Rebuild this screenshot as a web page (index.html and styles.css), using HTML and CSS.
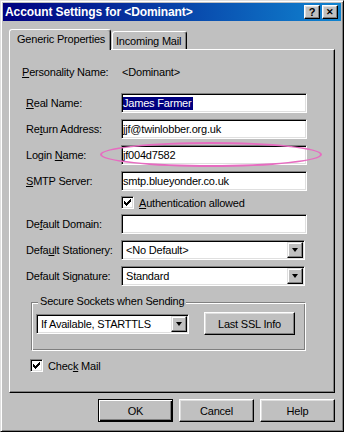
FILE: index.html
```html
<!DOCTYPE html>
<html lang="en">
<head>
  <meta charset="UTF-8">
  <title>Account Settings for &lt;Dominant&gt;</title>
  <link rel="stylesheet" href="styles.css">
</head>
<body>
  <div class="window">
    <div class="titlebar">
      <span class="title">Account Settings for &lt;Dominant&gt;</span>
      <div class="title-buttons">
        <button class="tbtn">?</button>
        <button class="tbtn close">&#x2715;</button>
      </div>
    </div>

    <div class="tabs">
      <div class="tab active">Generic Properties</div>
      <div class="tab">Incoming Mail</div>
    </div>

    <div class="panel">
      <div class="row personality">
        <span class="label"><u>P</u>ersonality Name:</span>
        <span>&lt;Dominant&gt;</span>
      </div>

      <div class="row first">
        <span class="label"><u>R</u>eal Name:</span>
        <div class="field"><span class="selected">James Farmer</span></div>
      </div>
      <div class="row">
        <span class="label">Re<u>t</u>urn Address:</span>
        <div class="field">jjf@twinlobber.org.uk</div>
      </div>
      <div class="row">
        <span class="label">Login <u>N</u>ame:</span>
        <div class="field">jf004d7582</div>
      </div>
      <div class="row">
        <span class="label"><u>S</u>MTP Server:</span>
        <div class="field">smtp.blueyonder.co.uk</div>
      </div>
      <div class="check-row auth">
        <span class="checkbox">
          <svg width="7" height="7" viewBox="0 0 7 7"><path d="M0 2h1v1h1v1h1v-1h1v-1h1v-1h1v-1h1v3h-1v1h-1v1h-1v1h-1v1h-1v-1h-1v-1h-1z" fill="#000"/></svg>
        </span>
        <span class="check-label"><u>A</u>uthentication allowed</span>
      </div>
      <div class="row domain">
        <span class="label">De<u>f</u>ault Domain:</span>
        <div class="field"></div>
      </div>
      <div class="row">
        <span class="label">Defa<u>u</u>lt Stationery:</span>
        <div class="combo">
          <span class="combo-text">&lt;No Default&gt;</span>
          <span class="combo-arrow"><i></i></span>
        </div>
      </div>
      <div class="row">
        <span class="label">Default Signature:</span>
        <div class="combo">
          <span class="combo-text">Standard</span>
          <span class="combo-arrow"><i></i></span>
        </div>
      </div>

      <div class="group">
        <span class="legend">Secure Sockets when Sending</span>
        <div class="group-row">
          <div class="combo small">
            <span class="combo-text">If Available, STARTTLS</span>
            <span class="combo-arrow"><i></i></span>
          </div>
          <button class="btn ssl">Last SSL Info</button>
        </div>
      </div>

      <div class="check-row mail">
        <span class="checkbox">
          <svg width="7" height="7" viewBox="0 0 7 7"><path d="M0 2h1v1h1v1h1v-1h1v-1h1v-1h1v-1h1v3h-1v1h-1v1h-1v1h-1v1h-1v-1h-1v-1h-1z" fill="#000"/></svg>
        </span>
        <span class="check-label">Chec<u>k</u> Mail</span>
      </div>
    </div>

    <div class="actions">
      <button class="btn default">OK</button>
      <button class="btn">Cancel</button>
      <button class="btn">Help</button>
    </div>

    <!-- pink ring drawn over the login field -->
    <div class="ring"></div>
  </div>
</body>
</html>
```

FILE: styles.css
```css
body {
  margin: 0;
  background: #c0c0c0;
  font-family: "Liberation Sans", Arial, sans-serif;
  font-size: 11px;
  letter-spacing: -0.2px;
  color: #000;
}

u {
  text-decoration: underline;
  text-underline-offset: 1px;
}

.window {
  position: relative;
  width: 344px;
  height: 432px;
  box-sizing: border-box;
  border: 1px solid;
  border-color: #dfdfdf #000 #000 #dfdfdf;
  box-shadow: inset 1px 1px #fff, inset -1px -1px #808080;
  padding: 2px;
  background: #c0c0c0;
  display: flex;
  flex-direction: column;
}

/* title bar */
.titlebar {
  height: 18px;
  flex-shrink: 0;
  display: flex;
  align-items: center;
  justify-content: space-between;
  padding: 0 3px 0 2px;
  background: linear-gradient(to right, #000080, #1084d0);
  color: #fff;
}

.title {
  font-size: 12px;
  font-weight: bold;
  letter-spacing: -0.1px;
}

.title-buttons {
  display: flex;
  gap: 2px;
}

.tbtn {
  width: 16px;
  height: 14px;
  box-sizing: border-box;
  padding: 0;
  border: 1px solid;
  border-color: #fff #000 #000 #fff;
  box-shadow: inset -1px -1px #808080, inset 1px 1px #dfdfdf;
  background: #c0c0c0;
  color: #000;
  font-family: "Liberation Sans", Arial, sans-serif;
  font-size: 11px;
  font-weight: bold;
  line-height: 12px;
  display: flex;
  align-items: center;
  justify-content: center;
}

.tbtn.close {
  font-size: 9px;
}

/* tabs */
.tabs {
  display: flex;
  align-items: flex-end;
  height: 20px;
  margin-top: 8px;
  padding-left: 6px;
  position: relative;
  z-index: 1;
}

.tab {
  height: 18px;
  box-sizing: border-box;
  border: 1px solid;
  border-bottom: none;
  border-color: #fff #000 transparent #fff;
  border-radius: 3px 3px 0 0;
  box-shadow: inset -1px 0 #808080;
  background: #c0c0c0;
  display: flex;
  align-items: center;
  width: 75px;
  padding-left: 3px;
  margin-left: 1px;
}

.tab.active {
  height: 21px;
  width: 102px;
  padding-left: 7px;
  padding-bottom: 3px;
  margin-left: 0;
  margin-bottom: -1px;
}

/* panel */
.panel {
  margin: 0 6px;
  height: 344px;
  flex-shrink: 0;
  box-sizing: border-box;
  border: 1px solid;
  border-color: #fff #000 #000 #fff;
  box-shadow: inset -1px -1px #808080;
  padding-top: 12px;
}

.row {
  display: flex;
  align-items: center;
  height: 20px;
  padding-left: 16px;
  margin-top: 6px;
}

.row.personality {
  padding-left: 12px;
  margin-top: 0;
}

.row.personality .label {
  width: 100px;
}

.row.first {
  margin-top: 11px;
}

.row.domain {
  margin-top: 5px;
}

.label {
  width: 95px;
  flex-shrink: 0;
}

.field {
  width: 186px;
  height: 20px;
  box-sizing: border-box;
  background: #fff;
  border: 1px solid;
  border-color: #808080 #fff #fff #808080;
  box-shadow: inset 1px 1px #000, inset -1px -1px #dfdfdf;
  padding-left: 1px;
  display: flex;
  align-items: center;
}

.selected {
  background: #000080;
  color: #fff;
  line-height: 13px;
  padding-right: 1px;
}

.combo {
  width: 184px;
  height: 20px;
  box-sizing: border-box;
  background: #fff;
  border: 1px solid;
  border-color: #808080 #fff #fff #808080;
  box-shadow: inset 1px 1px #000, inset -1px -1px #dfdfdf;
  padding: 1px;
  display: flex;
  align-items: center;
}

.combo-text {
  flex: 1;
  padding-left: 3px;
  white-space: nowrap;
}

.combo-arrow {
  width: 16px;
  height: 16px;
  box-sizing: border-box;
  border: 1px solid;
  border-color: #dfdfdf #000 #000 #dfdfdf;
  box-shadow: inset -1px -1px #808080, inset 1px 1px #fff;
  background: #c0c0c0;
  display: flex;
  align-items: center;
  justify-content: center;
}

.combo-arrow i {
  width: 0;
  height: 0;
  border-top: 4px solid #000;
  border-left: 3.5px solid transparent;
  border-right: 3.5px solid transparent;
}

/* checkboxes */
.check-row {
  display: flex;
  align-items: center;
  height: 13px;
}

.check-row.auth {
  margin-top: 5px;
  padding-left: 111px;
}

.check-row.mail {
  margin-top: 8px;
  padding-left: 20px;
}

.checkbox {
  width: 13px;
  height: 13px;
  box-sizing: border-box;
  background: #fff;
  border: 1px solid;
  border-color: #808080 #fff #fff #808080;
  box-shadow: inset 1px 1px #000, inset -1px -1px #dfdfdf;
  display: flex;
  align-items: center;
  justify-content: center;
}

.checkbox svg {
  shape-rendering: crispEdges;
}

.check-label {
  margin-left: 5px;
}

/* group box */
.group {
  position: relative;
  margin: 16px 0 0 21px;
  width: 275px;
  height: 49px;
  box-sizing: border-box;
  border: 1px solid;
  border-color: #808080 #fff #fff #808080;
  box-shadow: inset 1px 1px #fff, inset -1px -1px #808080;
  padding: 9px 0 0 4px;
}

.legend {
  position: absolute;
  top: -8px;
  left: 6px;
  padding: 0 2px;
  line-height: 13px;
  background: #c0c0c0;
}

.group-row {
  display: flex;
  align-items: center;
  height: 23px;
}

.combo.small {
  width: 153px;
}

/* buttons */
.btn {
  width: 75px;
  height: 23px;
  box-sizing: border-box;
  padding: 0;
  border: 1px solid;
  border-color: #fff #000 #000 #fff;
  box-shadow: inset -1px -1px #808080, inset 1px 1px #dfdfdf;
  background: #c0c0c0;
  color: #000;
  font-family: "Liberation Sans", Arial, sans-serif;
  font-size: 11px;
  letter-spacing: -0.2px;
}

.btn.default {
  border-color: #000;
  box-shadow: inset 1px 1px #fff, inset -1px -1px #000, inset -2px -2px #808080;
}

.btn.ssl {
  width: 91px;
  margin-left: 15px;
}

.actions {
  display: flex;
  justify-content: flex-end;
  gap: 6px;
  margin-top: 6px;
  padding-right: 6px;
}

.ring {
  position: absolute;
  left: 99px;
  top: 141px;
  width: 222px;
  height: 25px;
  box-sizing: border-box;
  border: 2px solid #e66cc0;
  border-radius: 50%;
  pointer-events: none;
}
```
